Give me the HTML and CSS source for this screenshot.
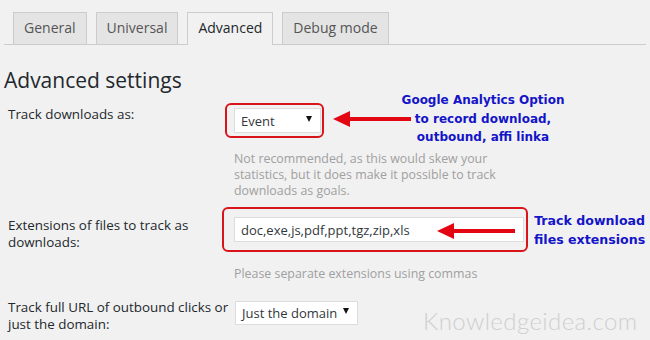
FILE: index.html
```html
<!DOCTYPE html>
<html lang="en">
<head>
    <meta charset="UTF-8">
    <title>Advanced settings</title>
    <link rel="stylesheet" href="styles.css">
</head>
<body>
    <div class="page">
        <div class="tabs">
            <span class="tab">General</span>
            <span class="tab">Universal</span>
            <span class="tab active">Advanced</span>
            <span class="tab">Debug mode</span>
        </div>

        <h2 class="title">Advanced settings</h2>

        <div class="form">
            <div class="row row-downloads">
                <div class="label">Track downloads as:</div>
                <div class="field">
                    <div class="control">
                        <span class="select select-event">Event <i class="caret"></i></span>
                        <span class="mark mark-event"></span>
                        <svg class="arrow arrow-event" width="78" height="16" viewBox="0 0 78 16">
                            <polygon points="0,8 17,0 17,6 78,6 78,10 17,10 17,16" fill="#e30613"/>
                        </svg>
                        <div class="note note-event">Google Analytics Option<br>to record download,<br>outbound, affi linka</div>
                    </div>
                    <p class="desc desc-long">Not recommended, as this would skew your statistics, but it does make it possible to track downloads as goals.</p>
                </div>
            </div>

            <div class="row row-ext">
                <div class="label">Extensions of files to track as downloads:</div>
                <div class="field">
                    <div class="control">
                        <span class="input">doc,exe,js,pdf,ppt,tgz,zip,xls</span>
                        <span class="mark mark-ext"></span>
                        <svg class="arrow arrow-ext" width="78" height="16" viewBox="0 0 78 16">
                            <polygon points="0,8 17,0 17,6 78,6 78,10 17,10 17,16" fill="#e30613"/>
                        </svg>
                        <div class="note note-ext">Track download<br>files extensions</div>
                    </div>
                    <p class="desc desc-ext">Please separate extensions using commas</p>
                </div>
            </div>

            <div class="row row-domain">
                <div class="label">Track full URL of outbound clicks or just the domain:</div>
                <div class="field">
                    <span class="select select-domain">Just the domain <i class="caret"></i></span>
                </div>
            </div>
        </div>

        <div class="watermark">Knowledgeidea.com</div>
    </div>
</body>
</html>
```

FILE: styles.css
```css
body {
    margin: 0;
    background-color: #f1f1f1;
    font-family: "Open Sans", "Liberation Sans", sans-serif;
    color: #23282d;
}
.page {
    position: relative;
    width: 650px;
    height: 340px;
    overflow: hidden;
}
.tabs {
    display: flex;
    gap: 9px;
    margin: 0 4px;
    padding: 12px 0 0 9px;
    border-bottom: 1px solid #ccc;
}
.tab {
    height: 31px;
    line-height: 30px;
    padding: 0 10px;
    font-size: 14px;
    color: #555;
    background-color: #e4e4e4;
    border: 1px solid #ccc;
    border-bottom: none;
}
.tab.active {
    color: #23282d;
    background-color: #f1f1f1;
    height: 32px;
    margin-bottom: -1px;
}
.title {
    margin: 20px 0 0 4px;
    font-size: 21px;
    font-weight: 400;
    line-height: 30px;
}
.form {
    padding-left: 8px;
}
.row {
    display: grid;
    grid-template-columns: 226px 1fr;
}
.row-downloads {
    margin-top: 11px;
}
.row-downloads .field {
    padding-top: 2px;
}
.row-ext {
    margin-top: 18px;
}
.row-domain {
    margin-top: 17px;
}
.row-domain .field {
    padding-top: 2px;
}
.label {
    font-size: 13.4px;
    line-height: 17px;
}
.control {
    position: relative;
    height: 25px;
}
.select,
.input {
    display: inline-flex;
    align-items: center;
    box-sizing: border-box;
    height: 25px;
    padding: 0 6px;
    background-color: #fff;
    border: 1px solid #ddd;
    font-size: 13px;
    color: #32373c;
    white-space: nowrap;
}
.select {
    justify-content: space-between;
}
.select-event {
    width: 87px;
}
.select-domain {
    width: 123px;
    height: 24px;
    margin-left: 1px;
}
.input {
    width: 290px;
}
.caret {
    width: 0;
    height: 0;
    border-left: 3.5px solid transparent;
    border-right: 3.5px solid transparent;
    border-top: 6px solid #111;
    margin-right: 2px;
    margin-top: -4px;
}
.mark {
    position: absolute;
    border: 2px solid #d9141b;
    border-radius: 6px;
    box-sizing: border-box;
}
.mark-event {
    left: -9px;
    top: -5px;
    width: 99px;
    height: 35px;
}
.mark-ext {
    left: -12px;
    top: -10px;
    width: 306px;
    height: 45px;
}
.arrow {
    position: absolute;
}
.arrow-event {
    left: 99px;
    top: 3px;
}
.arrow-ext {
    left: 203px;
    top: 6px;
}
.note {
    position: absolute;
    font-family: "DejaVu Sans", Verdana, sans-serif;
    font-weight: bold;
    font-size: 12px;
    line-height: 18.5px;
    color: #1414c8;
    text-align: center;
    white-space: nowrap;
}
.note-event {
    left: 156px;
    top: -17px;
    width: 186px;
}
.note-ext {
    left: 300px;
    top: -6px;
    font-size: 12.6px;
    line-height: 19px;
}
.desc {
    margin: 18px 0 0;
    font-size: 12.4px;
    line-height: 16px;
    color: #a0a0a0;
}
.desc-long {
    width: 262px;
}
.desc-ext {
    margin-top: 24px;
}
.watermark {
    position: absolute;
    left: 423px;
    top: 306px;
    font-family: Lato, "DejaVu Sans", sans-serif;
    font-weight: 300;
    font-size: 24px;
    letter-spacing: 0.4px;
    color: #cfcfcf;
}
```
